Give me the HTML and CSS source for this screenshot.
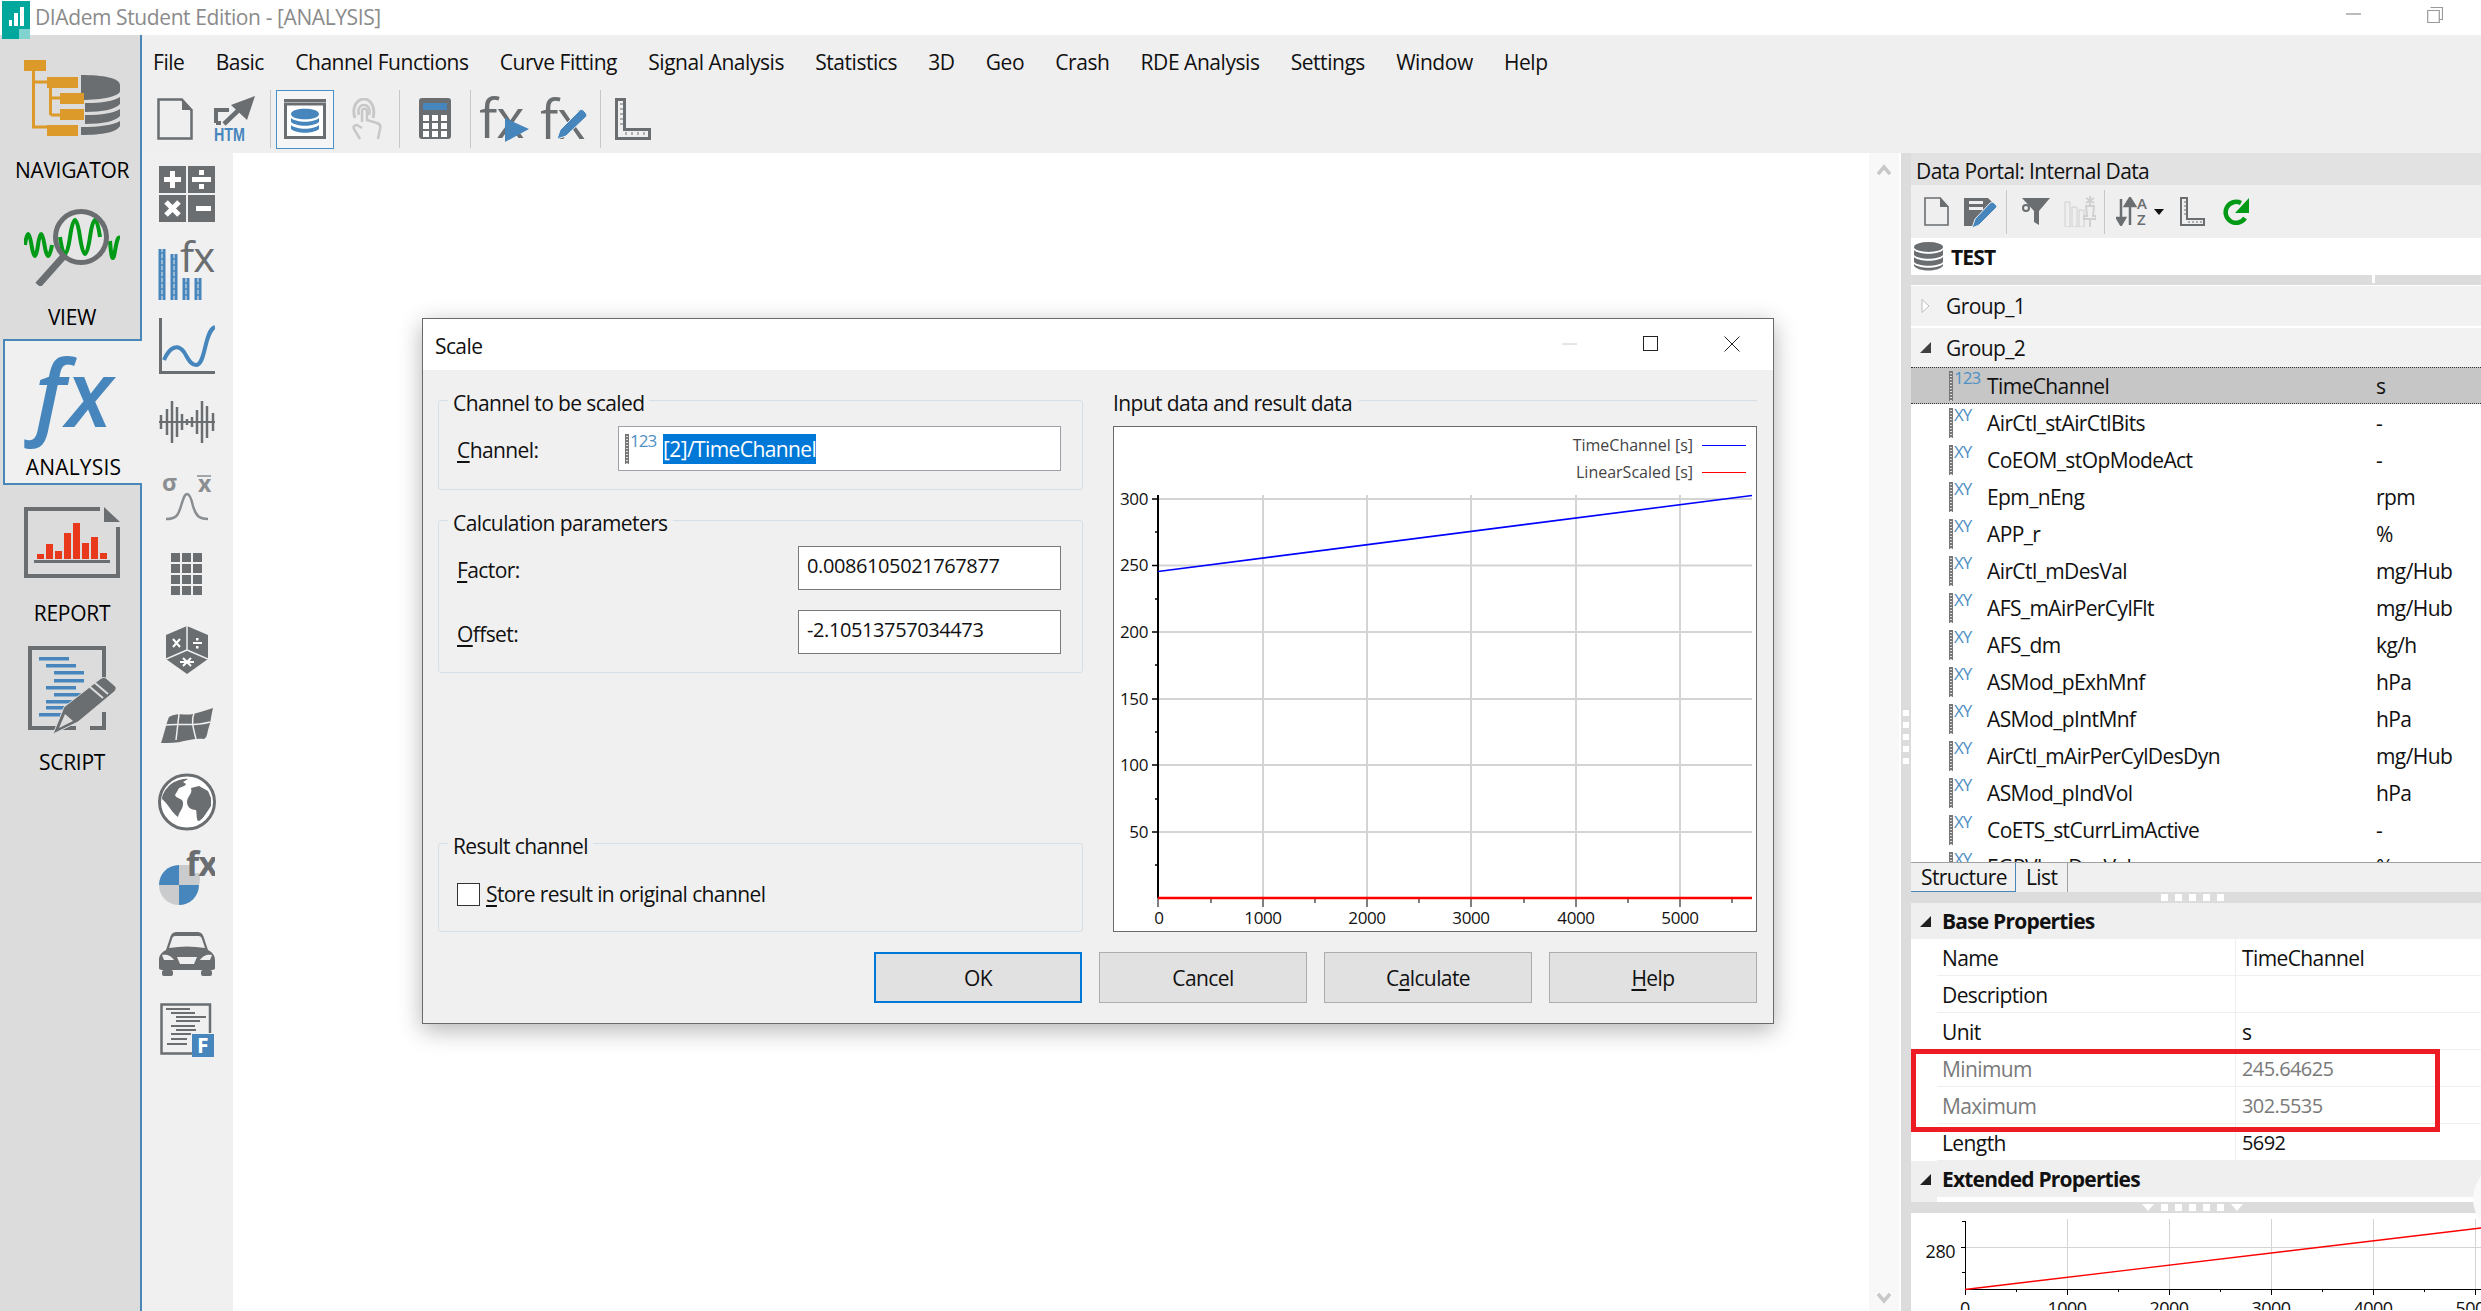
FILE: index.html
```html
<!DOCTYPE html>
<html lang="en">
<head>
<meta charset="utf-8">
<title>DIAdem Student Edition - [ANALYSIS]</title>
<link rel="stylesheet" href="styles.css">
</head>
<body>
<div class="app">
  <header class="titlebar">
    <svg class="applogo" viewBox="0 0 28 38"><rect width="28" height="38" fill="#00a79d"/><rect x="7" y="19" width="3" height="6" fill="#fff"/><rect x="12" y="12" width="4" height="13" fill="#fff"/><rect x="18" y="6" width="4" height="19" fill="#fff"/><rect x="17" y="28" width="11" height="10" fill="#fff" opacity=".5"/></svg>
    <span class="apptitle">DIAdem Student Edition - [ANALYSIS]</span>
    <span class="winbtns">
      <svg class="winmin" viewBox="0 0 16 16"><path d="M0 8h16" stroke="#999" stroke-width="1.4"/></svg>
      <svg class="winres" viewBox="0 0 16 16"><path d="M3.5.5h12v12h-3M.7 3.5h11.6v12H.7z" fill="#fff" stroke="#999" stroke-width="1.2"/></svg>
    </span>
  </header>
  <div class="main">
    <nav class="nav">
      <div class="navitem n1">
        <svg class="navicon" width="96" height="76" viewBox="0 0 96 76">
          <path d="M57 15c22 0 39 3 39 10v6c0 5-17 9-39 9zM61 43c18 0 28-2 35-6v7c-4 5-17 8-35 8zM61 55c18 0 28-2 35-6v7c-4 5-17 8-35 8zM57 67c18 0 32-2 39-6v5c-3 6-17 9-39 9z" fill="#6a6e71"/>
          <path d="M9.500 11v56H23M9.500 22H23M26.500 28v27M26.500 38H36M26.500 55H36" fill="none" stroke="#dc9a2a" stroke-width="3"/>
          <g fill="#dc9a2a"><rect width="22" height="11"/><rect x="23" y="17" width="31" height="11"/><rect x="36" y="33" width="24" height="11"/><rect x="36" y="49" width="24" height="11"/><rect x="23" y="65" width="31" height="11"/></g>
        </svg>
        <span class="navlabel">NAVIGATOR</span>
      </div>
      <div class="navitem n2">
        <svg class="navicon" width="96" height="77" viewBox="0 0 96 77">
          <circle cx="57" cy="28" r="26" fill="#e6e6e6"/>
          <path d="M1 36Q4 14 7.500 36T14 36T20.500 36T28 36M36 28Q41 62 46 28T56 28T66 28T76 28M86 32Q88 60 91 42T96 30" fill="none" stroke="#009a17" stroke-width="4"/>
          <circle cx="57" cy="28" r="25.500" fill="none" stroke="#6a6e71" stroke-width="5"/>
          <path d="M39 48 14 76" stroke="#6a6e71" stroke-width="7"/>
        </svg>
        <span class="navlabel">VIEW</span>
      </div>
      <div class="navitem n3 active">
        <span class="bigfx">fx</span>
        <span class="navlabel">ANALYSIS</span>
      </div>
      <div class="navitem n4">
        <svg class="navicon" width="96" height="71" viewBox="0 0 96 71">
          <path d="M94 20v49H2V2h74" fill="none" stroke="#6a6e71" stroke-width="4"/>
          <path d="M80 0l16 15H80z" fill="#6a6e71"/>
          <g fill="#e8391d"><rect x="13" y="47" width="7" height="5"/><rect x="22" y="37" width="7" height="15"/><rect x="31" y="44" width="7" height="8"/><rect x="40" y="26" width="7" height="26"/><rect x="49" y="16" width="7" height="36"/><rect x="58" y="36" width="7" height="16"/><rect x="67" y="30" width="7" height="22"/><rect x="76" y="46" width="7" height="6"/></g>
          <rect x="10" y="53" width="76" height="3" fill="#6a6e71"/>
        </svg>
        <span class="navlabel">REPORT</span>
      </div>
      <div class="navitem n5">
        <svg class="navicon" width="88" height="88" viewBox="0 0 88 88">
          <path d="M76 32V2H2v80h46M76 66v16H62" fill="none" stroke="#6a6e71" stroke-width="4"/>
          <g fill="#4686bd"><rect x="11" y="11" width="30" height="3.500"/><rect x="18" y="18" width="30" height="3.500"/><rect x="26" y="25" width="30" height="3.500"/><rect x="26" y="33" width="30" height="3.500"/><rect x="18" y="40" width="30" height="3.500"/><rect x="26" y="47" width="28" height="3.500"/><rect x="18" y="54" width="28" height="3.500"/><rect x="18" y="60" width="20" height="3.500"/><rect x="11" y="67" width="24" height="3.500"/></g>
          <path d="M25 88l11-27 36-28c3-2 5-2 7 0l8 7c2 2 1 4-1 6L50 76z" fill="#6a6e71" stroke="#dcdcdc" stroke-width="1"/>
          <path d="M62 41l13 11M67 37l13 11" stroke="#dcdcdc" stroke-width="2"/>
          <path d="M31 82l6-14 8 7z" fill="#dcdcdc"/>
        </svg>
        <span class="navlabel">SCRIPT</span>
      </div>
    </nav>
    <div class="work">
      <div class="menubar">
        <span class="mi">File</span><span class="mi">Basic</span><span class="mi">Channel Functions</span><span class="mi">Curve Fitting</span><span class="mi">Signal Analysis</span><span class="mi">Statistics</span><span class="mi">3D</span><span class="mi">Geo</span><span class="mi">Crash</span><span class="mi">RDE Analysis</span><span class="mi">Settings</span><span class="mi">Window</span><span class="mi">Help</span>
      </div>
      <div class="toolbar">
        <span class="tb"><svg width="36" height="42" viewBox="0 0 36 42"><path d="M1.500 1.500h23l10 11v28h-33z" fill="none" stroke="#6a6e71" stroke-width="2.500"/><path d="M25 0l11 12H25z" fill="#6a6e71"/></svg></span>
        <span class="tb"><svg width="42" height="46" viewBox="0 0 42 46"><path d="M2 27V14h13M2 27h5" fill="none" stroke="#6a6e71" stroke-width="4"/><path d="M10 28 30 9" stroke="#6a6e71" stroke-width="4.500"/><path d="M41 0 17 9l16 15z" fill="#6a6e71"/><text x="0" y="45" class="htm" textLength="31" lengthAdjust="spacingAndGlyphs">HTM</text></svg></span>
        <i class="sep s1"></i>
        <span class="tbsel"><svg width="42" height="40" viewBox="0 0 42 40"><rect x="1.500" y="5" width="39" height="33.500" fill="#fff" stroke="#6a6e71" stroke-width="3"/><rect width="42" height="3" fill="#6a6e71"/><path d="M7 15c0-7 28-7 28 0s-28 7-28 0zM7 19c6 5 22 5 28 0v4c-6 5-22 5-28 0zM7 26c6 5 22 5 28 0v4c-6 5-22 5-28 0z" fill="#4686bd"/></svg></span>
        <span class="tb t-touch"><svg width="32" height="42" viewBox="0 0 32 42" fill="none" stroke="#c8c8c8"><path d="M5 20C1 8 8 1 14 1s12 7 9 19" stroke-width="3"/><path d="M9 17c-2-6 1-10 5-10s7 4 5 10" stroke-width="2.500"/><path d="M12 24V13c0-3 5-3 5 0v9l10 3c3 1 4 3 3 6l-2 10M12 30l-5-3c-3 0-4 2-3 4l6 10" stroke-width="2.500"/></svg></span>
        <i class="sep s2"></i>
        <span class="tb t-calc"><svg width="32" height="42" viewBox="0 0 32 42"><rect width="32" height="41" rx="3" fill="#6a6e71"/><rect x="4" y="5" width="24" height="7" fill="#4686bd"/><g fill="#fff"><rect x="4" y="17" width="6" height="6"/><rect x="13" y="17" width="6" height="6"/><rect x="22" y="17" width="6" height="6"/><rect x="4" y="25" width="6" height="6"/><rect x="13" y="25" width="6" height="6"/><rect x="22" y="25" width="6" height="6"/><rect x="4" y="33" width="6" height="6"/><rect x="13" y="33" width="6" height="6"/><rect x="22" y="33" width="6" height="6"/></g></svg></span>
        <i class="sep s3"></i>
        <span class="tb"><svg width="50" height="46" viewBox="0 0 50 46"><text x="-1" y="42" class="fxgrey">fx</text><path d="M25 22l24 11-24 13z" fill="#4686bd"/></svg></span>
        <span class="tb"><svg width="48" height="44" viewBox="0 0 48 44"><text x="-1" y="42" class="fxgrey">fx</text><path d="M16 42l3-9L38 14c2-2 3-2 5 0l2 2c1 2 1 3 0 4L25 39z" fill="#4686bd" stroke="#efefef"/></svg></span>
        <i class="sep s4"></i>
        <span class="tb"><svg width="36" height="42" viewBox="0 0 36 42"><path d="M1.500 1.500h8v30h25v9h-33z" fill="none" stroke="#6a6e71" stroke-width="3"/><path d="M5 6h3M5 11h3M5 16h3M5 21h3M5 26h3M11 37v-3M17 37v-3M23 37v-3M29 37v-3" stroke="#6a6e71"/></svg></span>
      </div>
      <div class="body">
        <aside class="sidetools">
          <span class="st"><svg width="56" height="56" viewBox="0 0 56 56"><g fill="#6a6e71"><rect width="27" height="27"/><rect x="29" width="27" height="27"/><rect y="29" width="27" height="27"/><rect x="29" y="29" width="27" height="27"/></g><path d="M13.500 5v17M5 13.500h17M33 13.500h19M37 42.500h15M7 36l13 13M20 36L7 49" stroke="#fff" stroke-width="5" fill="none"/><rect x="40" y="4" width="5" height="5" fill="#fff"/><rect x="40" y="18" width="5" height="5" fill="#fff"/></svg></span>
          <span class="st"><svg width="58" height="60" viewBox="0 0 58 60"><g fill="none" stroke="#4686bd" stroke-width="3"><path d="M2 9v51M6 9v51M14 14v46M18 14v46M26 38v22M30 38v22M38 38v22M42 38v22"/><path d="M1 13h6M1 19h6M1 25h6M1 31h6M1 37h6M1 43h6M1 49h6M1 55h6M13 19h6M13 25h6M13 31h6M13 37h6M13 43h6M13 49h6M13 55h6M25 43h6M25 49h6M25 55h6M37 43h6M37 49h6M37 55h6" stroke-width="1.500"/></g><text x="22" y="32" class="fxside">fx</text></svg></span>
          <span class="st"><svg width="56" height="56" viewBox="0 0 56 56"><path d="M1.500 0v54.500H56" fill="none" stroke="#6a6e71" stroke-width="3"/><path d="M5 42c6-14 14-16 20-8 4 6 6 13 12 13 10 0 8-34 19-38" fill="none" stroke="#4686bd" stroke-width="4"/></svg></span>
          <span class="st"><svg width="56" height="42" viewBox="0 0 56 42"><path d="M0 21h56" stroke="#6a6e71" stroke-width="2"/><path d="M2 14v14M8 8v26M13 0v42M18 6v30M23 13v16M28 18v6M33 16v10M38 9v24M43 0v42M48 5v32M54 12v18" stroke="#6a6e71" stroke-width="2.500"/></svg></span>
          <span class="st"><svg width="50" height="46" viewBox="0 0 50 46"><text x="0" y="16" class="sigma">σ</text><text x="36" y="17" class="sigma">x</text><path d="M35 1h14" stroke="#8a8e91" stroke-width="1.500"/><path d="M4 44c10 0 12-3 15-13 3-10 4-12 6-12s4 3 6 12c3 10 6 13 15 13" fill="none" stroke="#8a8e91" stroke-width="2.500"/></svg></span>
          <span class="st"><svg width="31" height="42" viewBox="0 0 31 42"><g fill="#6a6e71"><rect width="9" height="9"/><rect x="11" width="9" height="9"/><rect x="22" width="9" height="9"/><rect y="11" width="9" height="9"/><rect x="11" y="11" width="9" height="9"/><rect x="22" y="11" width="9" height="9"/><rect y="22" width="9" height="9"/><rect x="11" y="22" width="9" height="9"/><rect x="22" y="22" width="9" height="9"/><rect y="33" width="9" height="9"/><rect x="11" y="33" width="9" height="9"/><rect x="22" y="33" width="9" height="9"/></g></svg></span>
          <span class="st"><svg width="42" height="48" viewBox="0 0 42 48"><path d="M21 0l21 9v24L21 48 0 33V9z" fill="#6a6e71"/><path d="M21 24V0M21 24L0 33M21 24l21 9" stroke="#efefef" stroke-width="1.500"/><path d="M7 13l7 8M14 13l-7 8M27 17h9M14 36h14M17 32l8 8M25 32l-8 8" stroke="#fff" stroke-width="2"/><rect x="30" y="12" width="2.500" height="2.500" fill="#fff"/><rect x="30" y="20" width="2.500" height="2.500" fill="#fff"/></svg></span>
          <span class="st"><svg width="52" height="36" viewBox="0 0 52 36"><path d="M8 9C18 4 24 8 32 6s14-4 20-6c-2 8-2 14-5 22-1 6-2 8-4 9-8-1-13 1-20 2-7 2-15 2-23 2 3-8 5-19 8-26z" fill="#6a6e71"/><path d="M18 6l-3 26M33 5c-3 8-1 14 2 26M4 17c14-2 28 2 45-3" stroke="#efefef" stroke-width="1.500" fill="none"/></svg></span>
          <span class="st"><svg width="58" height="58" viewBox="0 0 58 58"><ellipse cx="29" cy="29" rx="27.500" ry="27" fill="#fff" stroke="#6a6e71" stroke-width="3"/><path d="M10 14c4-5 14-9 20-8l-5 3 3 2c-2 4-7 2-8 6l-3 5c1 4 9 3 8 9 0 5-4 8-5 13C14 40 11 32 4 26c0-4 3-9 6-12zM33 15l8-2 9 5 3 7v8l-6 9c-3 4-5 6-7 6-2-3-1-8-2-11-5 0-9-3-9-8 0-6 6-8 4-14z" fill="#6a6e71"/></svg></span>
          <span class="st"><svg width="56" height="56" viewBox="0 0 56 56"><path d="M0 35a20 20 0 0 1 20-20v20z" fill="#4686bd"/><path d="M20 15h12v8h8a20 20 0 0 1 0 12H20zM0 35h20v20A20 20 0 0 1 0 35z" fill="#c9cbcc"/><path d="M20 35h20a20 20 0 0 1-20 20z" fill="#4686bd"/><text x="27" y="26" class="fxpie">fx</text></svg></span>
          <span class="st"><svg width="56" height="44" viewBox="0 0 56 44"><path d="M7 18l4-12c1-4 3-6 7-6h20c4 0 6 2 7 6l4 12c4 2 7 5 7 10v8c0 1-1 2-3 2H3c-2 0-3-1-3-2v-8c0-5 3-8 7-10z" fill="#6a6e71"/><path d="M10 16l3-9c1-3 2-3 5-3h20c3 0 4 0 5 3l3 9c-12-2-24-2-36 0z" fill="#efefef"/><path d="M3 23c4-1 9 0 12 5H5zM53 23c-4-1-9 0-12 5h10zM18 25h20l-3 7H21z" fill="#efefef"/><rect x="3" y="38" width="11" height="6" rx="2" fill="#6a6e71"/><rect x="42" y="38" width="11" height="6" rx="2" fill="#6a6e71"/></svg></span>
          <span class="st"><svg width="54" height="54" viewBox="0 0 54 54"><path d="M50 30V1.500H1.500v49H32" fill="none" stroke="#6a6e71" stroke-width="2.500"/><path d="M6 6h24M11 10h24M16 14h30M16 18h24M11 23h24M16 27h20M11 31h20M11 36h16M7 41h20" stroke="#6a6e71" stroke-width="2.200"/><rect x="32" y="31" width="22" height="23" fill="#4686bd"/><text x="37" y="50" class="fbadge">F</text></svg></span>
        </aside>
        <main class="canvas"></main>
        <div class="vscroll">
          <svg width="14" height="12" viewBox="0 0 14 12"><path d="M1 10l6-7 6 7" fill="none" stroke="#c8c8c8" stroke-width="3.500"/></svg>
          <svg width="14" height="12" viewBox="0 0 14 12"><path d="M1 2l6 7 6-7" fill="none" stroke="#c8c8c8" stroke-width="3.500"/></svg>
        </div>
        <div class="vgap"></div>
        <div class="vsplit"><i></i><i></i><i></i><i></i><i></i></div>
        <section class="panel">
          <div class="p-head">Data Portal: Internal Data</div>
          <div class="p-tools">
            <span class="pt"><svg width="25" height="29" viewBox="0 0 25 29"><path d="M1 1h15l8 9v18H1z" fill="none" stroke="#6a6e71" stroke-width="1.600"/><path d="M16 0l9 10h-9z" fill="#6a6e71"/></svg></span>
            <span class="pt"><svg width="33" height="32" viewBox="0 0 33 32"><path d="M0 2h24l4 4v8L14 30H0z" fill="#6a6e71"/><path d="M5 5h14v3H5zM5 11h14v3H5z" fill="#efefef"/><path d="M8 32l3-9L26 7c2-1 3-1 4 0l2 2c1 1 1 2 0 3L15 29z" fill="#4686bd" stroke="#efefef"/></svg></span>
            <i class="sep p1"></i>
            <span class="pt"><svg width="28" height="27" viewBox="0 0 28 27"><path d="M0 0h28L17 13v14l-5-3V13z" fill="#6a6e71"/><circle cx="4" cy="10" r="3" fill="#efefef" stroke="#6a6e71" stroke-width="2"/></svg></span>
            <span class="pt"><svg width="32" height="31" viewBox="0 0 32 31" stroke="#d0d0d0" fill="none"><path d="M1 6h5v25H1zM8 11h5v20H8zM15 14h5v17h-5z"/><path d="M26 0v9M22 2l8 5M30 2l-8 5M22 10h8l-1 10h3v3H20v-3h3zM26 23v8" stroke-width="2"/></svg></span>
            <i class="sep p2"></i>
            <span class="pt pt-sort"><svg width="48" height="29" viewBox="0 0 48 29"><path d="M5 28V2M5 28l-4-7h8zM14 1v27M14 1l-5 8h10z" stroke="#6a6e71" stroke-width="2.500" fill="#6a6e71"/><text x="21" y="12" class="az">A</text><text x="21" y="28" class="az">Z</text><path d="M38 12h10l-5 6z" fill="#111"/></svg></span>
            <span class="pt"><svg width="25" height="29" viewBox="0 0 25 29"><path d="M1 1h6v21h17v6H1z" fill="none" stroke="#6a6e71" stroke-width="2"/><path d="M4 5h2M4 9h2M4 13h2M4 17h2M9 26v-2M13 26v-2M17 26v-2M21 26v-2" stroke="#6a6e71"/></svg></span>
            <span class="pt"><svg width="29" height="27" viewBox="0 0 29 27"><path d="M23 20a10.500 10.500 0 1 1-4-15" fill="none" stroke="#009a17" stroke-width="4.500"/><path d="M27 0v15H13z" fill="#009a17"/></svg></span>
          </div>
          <div class="p-test"><svg width="29" height="29" viewBox="0 0 29 29"><ellipse cx="14.500" cy="5" rx="14.500" ry="5" fill="#6a6e71"/><path d="M0 8c5 5 24 5 29 0v5c-5 5-24 5-29 0zM0 15c5 5 24 5 29 0v5c-5 5-24 5-29 0zM0 22c5 5 24 5 29 0v2c-5 6-24 6-29 0z" fill="#6a6e71"/></svg><b>TEST</b></div>
          <div class="p-sep"><i></i></div>
          <div class="grp g1"><svg width="11" height="14" viewBox="0 0 8 14"><path d="M.5.500 7.500 7l-7 6.500z" fill="#fff" stroke="#bbb"/></svg><span>Group_1</span></div>
          <div class="grp g2"><svg width="11" height="11" viewBox="0 0 11 11"><path d="M11 0v11H0z" fill="#404040"/></svg><span>Group_2</span></div>
          <div class="list">
            <div class="row sel"><span class="chico"><i></i><em>123</em></span><span class="nm">TimeChannel</span><span>s</span></div>
            <div class="row"><span class="chico"><i></i><em>XY</em></span><span class="nm">AirCtl_stAirCtlBits</span><span>-</span></div>
            <div class="row"><span class="chico"><i></i><em>XY</em></span><span class="nm">CoEOM_stOpModeAct</span><span>-</span></div>
            <div class="row"><span class="chico"><i></i><em>XY</em></span><span class="nm">Epm_nEng</span><span>rpm</span></div>
            <div class="row"><span class="chico"><i></i><em>XY</em></span><span class="nm">APP_r</span><span>%</span></div>
            <div class="row"><span class="chico"><i></i><em>XY</em></span><span class="nm">AirCtl_mDesVal</span><span>mg/Hub</span></div>
            <div class="row"><span class="chico"><i></i><em>XY</em></span><span class="nm">AFS_mAirPerCylFlt</span><span>mg/Hub</span></div>
            <div class="row"><span class="chico"><i></i><em>XY</em></span><span class="nm">AFS_dm</span><span>kg/h</span></div>
            <div class="row"><span class="chico"><i></i><em>XY</em></span><span class="nm">ASMod_pExhMnf</span><span>hPa</span></div>
            <div class="row"><span class="chico"><i></i><em>XY</em></span><span class="nm">ASMod_pIntMnf</span><span>hPa</span></div>
            <div class="row"><span class="chico"><i></i><em>XY</em></span><span class="nm">AirCtl_mAirPerCylDesDyn</span><span>mg/Hub</span></div>
            <div class="row"><span class="chico"><i></i><em>XY</em></span><span class="nm">ASMod_pIndVol</span><span>hPa</span></div>
            <div class="row"><span class="chico"><i></i><em>XY</em></span><span class="nm">CoETS_stCurrLimActive</span><span>-</span></div>
            <div class="row"><span class="chico"><i></i><em>XY</em></span><span class="nm">EGRVlv_rDesVal</span><span>%</span></div>
          </div>
          <div class="tabs"><span class="tab on">Structure</span><span class="tab">List</span></div>
          <div class="hsplit"><i></i><i></i><i></i><i></i><i></i></div>
          <div class="phead"><svg width="11" height="11" viewBox="0 0 11 11"><path d="M11 0v11H0z" fill="#202020"/></svg><b>Base Properties</b></div>
          <div class="prow"><span>Name</span><span>TimeChannel</span></div>
          <div class="prow"><span>Description</span><span></span></div>
          <div class="prow"><span>Unit</span><span>s</span></div>
          <div class="prow ro"><span>Minimum</span><span class="digits">245.64625</span></div>
          <div class="prow ro"><span>Maximum</span><span class="digits">302.5535</span></div>
          <div class="prow"><span>Length</span><span class="digits">5692</span></div>
          <div class="phead"><svg width="11" height="11" viewBox="0 0 11 11"><path d="M11 0v11H0z" fill="#202020"/></svg><b>Extended Properties</b></div>
          <div class="pstrip"></div>
          <div class="hsplit h2"><b class="tri"></b><i></i><i></i><i></i><i></i><i></i><b class="tri"></b></div>
          <svg class="minichart" width="570" height="97" viewBox="1911 1214 570 97">
            <rect x="1911" y="1214" width="570" height="97" fill="#fff"/>
            <g stroke="#d4d4d4" stroke-width="1"><path d="M2067.500 1220v70M2169.500 1220v70M2271.500 1220v70M2373.500 1220v70M2475.500 1220v70M1965 1248.500h516"/></g>
            <path d="M1965.500 1222v68.500H2481M1961 1248.500h4M1962 1222.500h3M1962 1273.500h3M1965.500 1290v6M2016.500 1290v3M2067.500 1290v6M2118.500 1290v3M2169.500 1290v6M2220.500 1290v3M2271.500 1290v6M2322.500 1290v3M2373.500 1290v6M2424.500 1290v3M2475.500 1290v6" stroke="#000" fill="none"/>
            <path d="M1965 1290.500 2481 1229" stroke="#f00" stroke-width="1.300"/>
            <g class="mctext"><text x="1955" y="1259" text-anchor="end">280</text><text x="1965" y="1316" text-anchor="middle">0</text><text x="2067" y="1316" text-anchor="middle">1000</text><text x="2169" y="1316" text-anchor="middle">2000</text><text x="2271" y="1316" text-anchor="middle">3000</text><text x="2373" y="1316" text-anchor="middle">4000</text><text x="2475" y="1316" text-anchor="middle">5000</text></g>
          </svg>
          <div class="redbox"></div>
          <div class="orb"></div>
        </section>
      </div>
    </div>
  </div>

  <div class="dialog">
    <div class="dlg-title">
      <span class="dlg-name">Scale</span>
      <span class="dlg-btns">
        <svg width="16" height="16" viewBox="0 0 16 16"><path d="M0 8h15" stroke="#ccc" stroke-width="1"/></svg>
        <svg width="16" height="16" viewBox="0 0 16 16"><rect x=".5" y=".5" width="14" height="14" fill="none" stroke="#222"/></svg>
        <svg width="16" height="16" viewBox="0 0 16 16"><path d="M.5.500l15 15M15.500.500l-15 15" stroke="#222" stroke-width="1"/></svg>
      </span>
    </div>
    <div class="dlg-body">
      <div class="dlg-left">
        <div class="group g-chan">
          <div class="legend">Channel to be scaled</div>
          <div class="field">
            <label class="lbl"><u>C</u>hannel:</label>
            <div class="chan-input"><span class="chico small"><i></i><em>123</em></span><span class="seltext">[2]/TimeChannel</span></div>
          </div>
        </div>
        <div class="group g-calc">
          <div class="legend">Calculation parameters</div>
          <div class="field">
            <label class="lbl"><u>F</u>actor:</label>
            <div class="num">0.0086105021767877</div>
          </div>
          <div class="field f2">
            <label class="lbl"><u>O</u>ffset:</label>
            <div class="num">-2.10513757034473</div>
          </div>
        </div>
        <div class="group g-res">
          <div class="legend">Result channel</div>
          <div class="checkline"><span class="check"></span><span><u>S</u>tore result in original channel</span></div>
        </div>
      </div>
      <div class="dlg-right">
        <div class="charthead"><span>Input data and result data</span><i></i></div>
        <svg class="chart" width="644" height="506" viewBox="1113 426 644 506">
          <rect x="1113.500" y="426.500" width="643" height="505" fill="#fff" stroke="#6a6a6a"/>
          <g stroke="#d4d4d4" stroke-width="2"><path d="M1263 495v403M1367 495v403M1471 495v403M1576 495v403M1680 495v403M1158 499h594M1158 565.500h594M1158 632h594M1158 699h594M1158 765h594M1158 832h594"/></g>
          <path d="M1158 495v403" stroke="#000" stroke-width="2"/>
          <path d="M1152 499h6M1152 565.500h6M1152 632h6M1152 699h6M1152 765h6M1152 832h6M1155 532h3M1155 599h3M1155 665h3M1155 732h3M1155 799h3M1155 865h3" stroke="#000" stroke-width="1.500"/>
          <path d="M1158 898v9M1263 898v9M1367 898v9M1471 898v9M1576 898v9M1680 898v9M1211 898v5M1315 898v5M1419 898v5M1524 898v5M1628 898v5M1732 898v5" stroke="#000"/>
          <path d="M1158 571.500 1752 495.500" stroke="#00f" stroke-width="1.600"/>
          <path d="M1158 898h594" stroke="#f00" stroke-width="2.400"/>
          <path d="M1702 445.500h44" stroke="#00f"/><path d="M1702 472.500h44" stroke="#f00"/>
          <g class="ctext end">
            <text x="1148" y="505">300</text><text x="1148" y="571">250</text><text x="1148" y="638">200</text><text x="1148" y="705">150</text><text x="1148" y="771">100</text><text x="1148" y="838">50</text>
          </g>
          <g class="ctext mid">
            <text x="1159" y="924">0</text><text x="1263" y="924">1000</text><text x="1367" y="924">2000</text><text x="1471" y="924">3000</text><text x="1576" y="924">4000</text><text x="1680" y="924">5000</text>
          </g>
          <g class="ctext end leg">
            <text x="1693" y="451">TimeChannel [s]</text><text x="1693" y="478">LinearScaled [s]</text>
          </g>
        </svg>
      </div>
    </div>
    <div class="dlg-foot">
      <button class="btn def">OK</button>
      <button class="btn">Cancel</button>
      <button class="btn">C<u>a</u>lculate</button>
      <button class="btn"><u>H</u>elp</button>
    </div>
  </div>
</div>
</body>
</html>
```
FILE: styles.css
```css
* { box-sizing: border-box; }
html, body { margin: 0; padding: 0; }
body { width: 2481px; height: 1311px; overflow: hidden; font-family: "Open Sans", "Noto Sans", sans-serif; font-size: 21px; color: #111; background: #fff; letter-spacing: -0.6px; }
.app { position: relative; width: 2481px; height: 1311px; overflow: hidden; }
svg { display: block; flex: none; }

.titlebar { height: 35px; display: flex; align-items: flex-start; background: #fff; }
.applogo { width: 28px; height: 38px; margin: 1px 0 0 2px; position: relative; z-index: 2; }
.apptitle { margin: 3px 0 0 5px; line-height: 28px; color: #8b8b8b; letter-spacing: -0.4px; }
.winbtns { margin-left: auto; display: flex; }
.winmin { width: 15px; height: 16px; margin: 6px 66px 0 0; }
.winres { width: 16px; height: 16px; margin: 7px 38px 0 0; }

.main { display: flex; height: 1276px; }
.nav { width: 142px; flex: none; background: #dcdcdc; border-right: 2px solid #4a86b8; display: flex; flex-direction: column; }
.navitem { display: flex; flex-direction: column; align-items: center; width: 140px; padding-left: 4px; }
.navlabel { line-height: 28px; letter-spacing: -0.3px; color: #000; }
.n1 { height: 154px; padding-top: 25px; }
.n1 .navlabel { margin-top: 20px; }
.n2 { height: 150px; padding-top: 20px; }
.n2 .navlabel { margin-top: 17px; }
.n3 { height: 146px; padding-left: 0; margin-left: 3px; width: 139px; background: #f0f0f0; border: solid #4a86b8; border-width: 2px 0 2px 2px; position: relative; }
.n3 .navlabel { letter-spacing: 0.2px; }
.bigfx { height: 112px; line-height: 102px; font-size: 92px; font-style: italic; font-weight: 600; color: #4686bd; letter-spacing: 0; }
.n4 { height: 147px; padding-top: 22px; }
.n4 .navlabel { margin-top: 21px; }
.n5 { padding-top: 14px; }
.n5 .navlabel { margin-top: 14px; }

.work { flex: 1; display: flex; flex-direction: column; min-width: 0; }
.menubar { height: 52px; flex: none; display: flex; align-items: center; background: #efefef; padding: 2px 0 0 11px; }
.mi { line-height: 28px; margin-right: 31.200px; color: #111; letter-spacing: -0.45px; }

.toolbar { height: 66px; flex: none; display: flex; align-items: center; background: #efefef; padding: 0 0 2px 3px; }
.tb { width: 60px; height: 50px; display: flex; align-items: center; justify-content: center; }
.sep { display: block; width: 1px; background: #c8c8c8; flex: none; }
.toolbar .sep { height: 58px; }
.s1 { margin: 0 5px; }
.s2 { margin: 0 5px 0 3px; }
.s3 { margin: 0 4px 0 5px; }
.s4 { margin: 0 2px 0 5px; }
.tbsel { width: 58px; height: 59px; border: 1px solid #4a90c8; background: #f5f5f5; display: flex; align-items: center; justify-content: center; }
.t-touch { margin-left: 2px; }
.htm { font: 700 19px "Liberation Sans", sans-serif; fill: #4686bd; letter-spacing: 0; }
.fxgrey { font: 500 54px "Open Sans", sans-serif; fill: #6a6e71; letter-spacing: -1px; }
.fxside { font: 500 42px "Open Sans", sans-serif; fill: #6a6e71; letter-spacing: -1px; }
.fxpie { font: 700 34px "Open Sans", sans-serif; fill: #6a6e71; letter-spacing: -1px; }
.sigma { font: 700 23px "Open Sans", sans-serif; fill: #8a8e91; letter-spacing: 0; }
.fbadge { font: 700 21px "Open Sans", sans-serif; fill: #fff; letter-spacing: 0; }
.az { font: 600 15px "Open Sans", sans-serif; fill: #6a6e71; letter-spacing: 0; }

.body { flex: 1; display: flex; min-height: 0; }
.sidetools { width: 91px; flex: none; background: #f0f0f0; padding-top: 3px; display: flex; flex-direction: column; }
.st { height: 76px; display: flex; align-items: center; justify-content: center; padding-right: 2px; flex: none; }
.canvas { flex: 1; background: #fff; }
.vscroll { width: 30px; flex: none; background: #f8f8f8; display: flex; flex-direction: column; justify-content: space-between; align-items: center; padding: 11px 0 7px; }
.vgap { width: 2px; flex: none; background: #fff; }
.vsplit { width: 10px; flex: none; background: #dcdcdc; display: flex; flex-direction: column; align-items: center; gap: 6px; padding-top: 557px; }
.vsplit i { display: block; width: 6px; height: 6px; background: #fff; }

.panel { position: relative; width: 570px; flex: none; background: #fff; display: flex; flex-direction: column; overflow: hidden; }
.p-head { height: 32px; flex: none; background: #e2e2e2; line-height: 36px; padding-left: 5px; }
.p-tools { height: 53px; flex: none; background: #efefef; display: flex; align-items: center; padding-left: 3px; }
.pt { width: 44px; height: 40px; display: flex; align-items: center; justify-content: center; }
.p-tools .sep { height: 44px; }
.p1 { margin: 0 7px 0 4px; }
.p2 { margin: 0 5px 0 2px; }
.pt-sort { width: 60px; }
.p-test { height: 37px; flex: none; background: #fff; display: flex; align-items: center; padding-left: 3px; gap: 8px; }
.p-test b { font-weight: 700; letter-spacing: -0.8px; }
.p-sep { height: 11px; flex: none; background: linear-gradient(#dcdcdc 10px, #fff 10px); padding-left: 461px; }
.p-sep i { display: block; width: 3px; height: 8px; background: #fff; }
.grp { flex: none; background: #f2f2f2; display: flex; align-items: center; padding-left: 9px; }
.grp span { margin-left: 15px; }
.g1 { height: 40px; margin-bottom: 2px; }
.g2 { height: 39px; }

.list { height: 495px; flex: none; overflow: hidden; }
.row { height: 37px; display: flex; align-items: center; padding-left: 38px; }
.row.sel { background: #c6c6c6; border: dotted #333; border-width: 1px 0; }
.nm { width: 389px; flex: none; }
.chico { position: relative; width: 38px; height: 30px; flex: none; display: block; }
.chico i { position: absolute; left: 0; top: 0; width: 4px; height: 30px; background: repeating-linear-gradient(#777 0 2px, #ddd 2px 3px); border: solid #777; border-width: 0 1px; }
.chico em { position: absolute; left: 5px; top: -3px; font-style: normal; font-size: 17px; line-height: 20px; color: #4f8fc4; letter-spacing: -1px; }

.tabs { height: 30px; flex: none; display: flex; background: #f0f0f0; border-top: 1px solid #a0a0a0; }
.tab { padding: 0 10px; line-height: 29px; border-right: 1px solid #a0a0a0; }
.tab.on { width: 105px; padding: 0 0 0 10px; border-right: 1px solid #4a86b8; border-bottom: 1px solid #4a86b8; }
.hsplit { height: 11px; flex: none; background: #dcdcdc; display: flex; justify-content: center; align-items: center; gap: 7px; padding-right: 7px; }
.hsplit i { display: block; width: 7px; height: 7px; background: #fff; }
.h2 .tri { display: block; width: 0; height: 0; border: 6px solid transparent; border-top: 7px solid #fff; border-bottom: 0; }
.phead { height: 36px; flex: none; background: #efefef; display: flex; align-items: center; padding-left: 9px; }
.phead b { margin-left: 11px; font-weight: 700; letter-spacing: -0.8px; }
.prow { height: 37px; flex: none; display: grid; grid-template-columns: 298px 1fr; margin-left: 26px; border-bottom: 1px solid #efefef; background: #fff; }
.prow span { padding-left: 5px; line-height: 38px; }
.prow span:last-child { border-left: 1px solid #efefef; padding-left: 6px; }
.prow span.digits { font-size: 20px; }
.prow.ro { color: #7a7a7a; }
.pstrip { height: 5px; flex: none; background: linear-gradient(90deg, #efefef 26px, #fff 26px); }
.minichart { flex: none; }
.mctext text { font: 18px "Open Sans", sans-serif; letter-spacing: -0.5px; fill: #111; }
.redbox { position: absolute; left: 0; top: 896px; width: 529px; height: 83px; border: 5px solid #ed1c24; }
.orb { position: absolute; right: -64px; top: 1010px; width: 72px; height: 72px; border-radius: 50%; background: #fafafa; }

.dialog { position: absolute; left: 422px; top: 318px; width: 1352px; height: 706px; background: #f0f0f0; border: 1px solid #6a6a6a; box-shadow: 0 6px 22px rgba(0,0,0,.3); display: flex; flex-direction: column; }
.dlg-title { height: 51px; flex: none; background: #fff; display: flex; align-items: center; }
.dlg-name { margin: 2px 0 0 12px; line-height: 28px; }
.dlg-btns { margin-left: auto; display: flex; gap: 65px; margin-right: 33px; margin-top: -1px; }
.dlg-body { display: flex; padding: 30px 16px 0 15px; gap: 30px; height: 562px; flex: none; }
.dlg-left { width: 645px; flex: none; display: flex; flex-direction: column; gap: 30px; }
.dlg-right { width: 644px; flex: none; }
.group { border: 1px solid #d5dfe6; border-radius: 3px; padding: 0 21px 0 18px; flex: none; }
.legend { height: 28px; line-height: 28px; margin: -12px 0 0 -9px; padding: 0 5px; width: fit-content; background: linear-gradient(#f0f0f0 0 100%); }
.g-chan { height: 90px; }
.g-calc { height: 153px; }
.g-res { height: 89px; margin-top: 140px; }
.field { display: flex; align-items: center; justify-content: space-between; margin-top: 9px; }
.f2 { margin-top: 20px; }
.lbl { line-height: 28px; margin-top: 3px; }
.chan-input { width: 443px; height: 45px; background: #fff; border: 1px solid #a0a0a8; display: flex; align-items: center; padding-left: 6px; }
.seltext { background: #0078d7; color: #fff; height: 30px; line-height: 30px; }
.num { width: 263px; height: 44px; background: #fff; border: 1px solid #7a7a7a; padding-left: 8px; line-height: 38px; font-size: 20px; letter-spacing: -0.4px; }
.checkline { display: flex; align-items: center; gap: 6px; margin-top: 20px; }
.check { width: 23px; height: 23px; background: #fff; border: 1px solid #333; flex: none; }
.charthead { height: 34px; display: flex; align-items: flex-start; gap: 7px; margin-top: -14px; margin-bottom: 6px; }
.charthead span { line-height: 28px; margin-top: 3px; }
.charthead i { flex: 1; height: 1px; background: #d5dfe6; margin-top: 14px; }
.ctext text { font: 17px "Open Sans", sans-serif; letter-spacing: -0.4px; fill: #111; }
.end text { text-anchor: end; }
.mid text { text-anchor: middle; }
.leg text { font-size: 16px; letter-spacing: 0; fill: #444; }
.dlg-foot { display: flex; justify-content: flex-end; gap: 17px; padding-right: 16px; margin-top: 20px; }
.btn { width: 208px; height: 51px; border: 1px solid #adadad; background: #e1e1e1; font: inherit; letter-spacing: inherit; color: #111; padding: 0; }
.btn.def { border: 2px solid #0078d7; }
u { text-underline-offset: 3px; }
```
